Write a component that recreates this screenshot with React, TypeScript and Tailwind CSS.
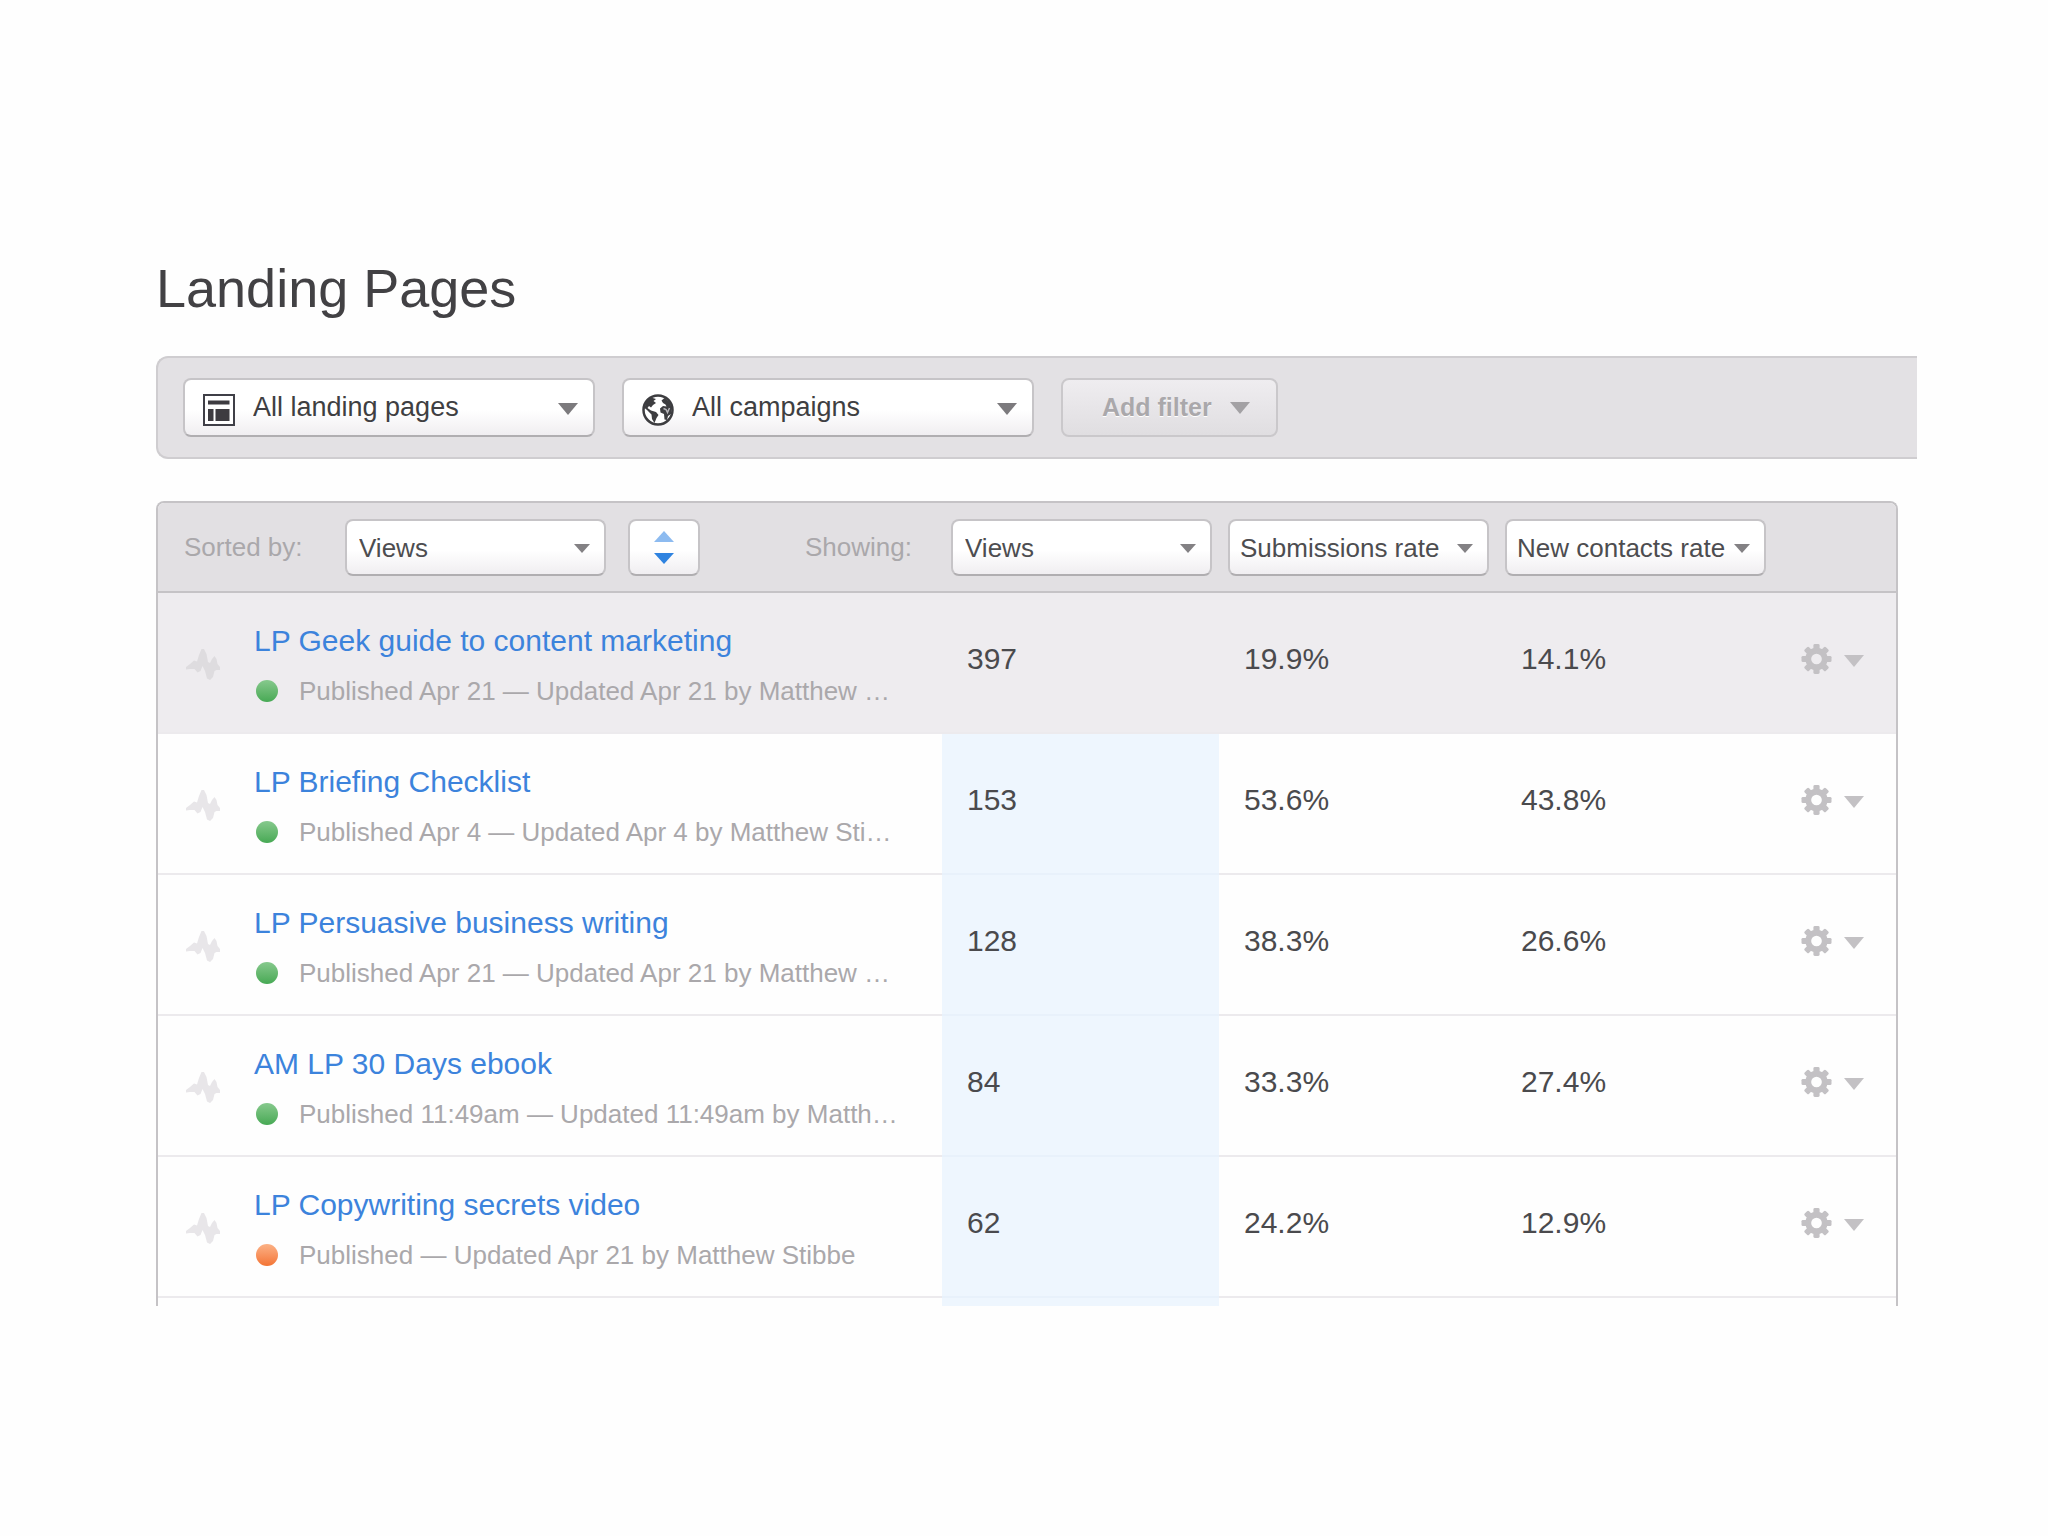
import React from "react";

type CaretProps = { className: string };

function Caret({ className }: CaretProps) {
  return (
    <svg viewBox="0 0 20 12" preserveAspectRatio="none" className={className} aria-hidden="true">
      <path d="M0 0H20L10 12Z" fill="currentColor" />
    </svg>
  );
}

function LayoutIcon() {
  return (
    <svg viewBox="0 0 32 32" className="size-8" aria-hidden="true">
      <rect x="1" y="1" width="30" height="30" fill="#fff" stroke="#3f3f47" strokeWidth="2" />
      <path d="M5 6.500H26.500V10.500H5ZM5 15H10.500V27H5ZM12.500 15H26.500V27H12.500Z" fill="#3d3b40" />
    </svg>
  );
}

function GlobeIcon() {
  return (
    <svg viewBox="0 0 32 32" className="size-8" aria-hidden="true">
      <circle cx="16" cy="16" r="14.500" fill="#fff" stroke="#3d3d40" strokeWidth="2.500" />
      <path
        d="M4 8L9 3.500L14 5L11.500 7L14 9L11 11L9 13.500L7 12L5.500 14L9 16.500L14 18L16.500 21L14.500 24L12.500 29L10 25L9.500 20.500L5 16L2.500 14Z"
        fill="#3d3d40"
      />
      <path
        d="M21 9L19.500 6.500L22.500 4L27.500 8L30 14L29 20L26 22L25 26L22.500 25.500L22 20L18.500 18.500L18 14.500L21 12L24.500 12.500L23.500 10.500Z"
        fill="#3d3d40"
      />
      <path d="M21.500 14.500L24 15.500L25.500 18.500L27.500 14" fill="none" stroke="#b9b7bb" strokeWidth="1.500" />
    </svg>
  );
}

function PulseIcon({ className }: { className: string }) {
  return (
    <svg viewBox="0 0 34 34" className={`h-[34px] w-[34px] shrink-0 ${className}`} aria-hidden="true">
      <path
        d="M0 20L4 17L8 13.500L11 14.500L13 8L15.500 2H18L20.500 7L22 15L24 16L26 12L28.500 9L30.500 12L31.500 17L34 20V23H30.500L28.500 24L27 30L24 33L21 31.500L19 24L16.500 19L14.500 24L11.500 25.500L8.500 22L4 22L0 22.500Z"
        fill="currentColor"
      />
    </svg>
  );
}

function GearIcon() {
  const teeth = [0, 45, 90, 135, 180, 225, 270, 315];
  return (
    <svg viewBox="0 0 32 32" className="h-8 w-[31px]" aria-hidden="true">
      <circle cx="16" cy="16" r="8.500" fill="none" stroke="currentColor" strokeWidth="6" />
      {teeth.map((angle) => (
        <rect key={angle} x="12.800" y="0.500" width="6.400" height="7" rx="1.500" fill="currentColor" transform={`rotate(${angle} 16 16)`} />
      ))}
    </svg>
  );
}

const controlLook =
  "rounded-lg border-2 border-[#c6c4c7] border-b-[#b0aeb1] bg-linear-to-b from-white from-55% to-[#f0eef1]";

type FilterSelectProps = { label: string; value: string; icon: React.ReactNode };

function FilterSelect({ label, value, icon }: FilterSelectProps) {
  return (
    <div className="relative w-[412px]">
      <span className="pointer-events-none absolute top-4 left-5">{icon}</span>
      <select
        aria-label={label}
        className={`${controlLook} block h-[59px] w-full appearance-none pr-12 pl-[68px] text-[27px] text-[#3f3f42]`}
      >
        <option>{value}</option>
      </select>
      <Caret className="pointer-events-none absolute top-[25px] right-[17px] h-3 w-5 text-[#7c7a7d]" />
    </div>
  );
}

type ColumnSelectProps = { id?: string; label?: string; value: string; pad?: string };

function ColumnSelect({ id, label, value, pad = "pl-2.5" }: ColumnSelectProps) {
  return (
    <div className="relative w-[261px]">
      <select
        id={id}
        aria-label={label}
        className={`${controlLook} ${pad} block h-[57px] w-full appearance-none pt-0.5 pr-8 text-[26px] font-normal text-[#4d4d50]`}
      >
        <option>{value}</option>
      </select>
      <Caret className="pointer-events-none absolute top-[25px] right-4 h-[9px] w-4 text-[#838184]" />
    </div>
  );
}

type Page = {
  title: string;
  meta: string;
  live: boolean;
  views: string;
  submissions: string;
  contacts: string;
};

const pages: Page[] = [
  {
    title: "LP Geek guide to content marketing",
    meta: "Published Apr 21 — Updated Apr 21 by Matthew …",
    live: true,
    views: "397",
    submissions: "19.9%",
    contacts: "14.1%",
  },
  {
    title: "LP Briefing Checklist",
    meta: "Published Apr 4 — Updated Apr 4 by Matthew Sti…",
    live: true,
    views: "153",
    submissions: "53.6%",
    contacts: "43.8%",
  },
  {
    title: "LP Persuasive business writing",
    meta: "Published Apr 21 — Updated Apr 21 by Matthew …",
    live: true,
    views: "128",
    submissions: "38.3%",
    contacts: "26.6%",
  },
  {
    title: "AM LP 30 Days ebook",
    meta: "Published 11:49am — Updated 11:49am by Matth…",
    live: true,
    views: "84",
    submissions: "33.3%",
    contacts: "27.4%",
  },
  {
    title: "LP Copywriting secrets video",
    meta: "Published — Updated Apr 21 by Matthew Stibbe",
    live: false,
    views: "62",
    submissions: "24.2%",
    contacts: "12.9%",
  },
];

const numberCell = "pb-2 pl-[25px] text-[30px] text-[#4a4a4d]";

function PageRow({ page, active }: { page: Page; active: boolean }) {
  return (
    <tr className={`h-[141px] border-b-2 border-[#eceaed] ${active ? "bg-[#eeecef]" : ""}`}>
      <td className="pt-[3px] pl-7">
        <div className="flex items-center gap-[34px]">
          <PulseIcon className={active ? "text-[#dedcdf]" : "text-[#e8e6e9]"} />
          <div className="whitespace-nowrap">
            <a href="#page" className="block text-[30px] leading-[38px] text-[#3c83dc]">
              {page.title}
            </a>
            <div className="mt-[15px] flex items-center gap-[21px] pl-0.5 text-[26px] leading-8 text-[#aaa8ab]">
              <span
                className={`size-[22px] rounded-full bg-linear-to-b ${
                  page.live ? "from-[#86c98d] to-[#46a954]" : "from-[#fbb185] to-[#f37433]"
                }`}
              />
              <span>{page.meta}</span>
            </div>
          </div>
        </div>
      </td>
      <td className={`${numberCell} ${active ? "" : "border-b-2 border-[#e8f1fb] bg-[#eef6fe]"}`}>{page.views}</td>
      <td className={numberCell}>{page.submissions}</td>
      <td className={numberCell}>{page.contacts}</td>
      <td className="pb-2 pl-7">
        <button type="button" aria-label={`Actions for ${page.title}`} className="flex items-center gap-3 text-[#c3c1c4]">
          <GearIcon />
          <Caret className="mt-1 h-3 w-5" />
        </button>
      </td>
    </tr>
  );
}

export default function App() {
  return (
    <main className="min-h-screen bg-[#fefefe] pt-[256px] pr-[131px] pl-[156px] font-['Liberation_Sans',Arial,sans-serif]">
      <h1 className="mb-9 text-[54px] leading-[64px] text-[#424144]">Landing Pages</h1>

      <section
        aria-label="Filters"
        className="flex gap-[27px] rounded-l-xl border-2 border-r-0 border-[#cfcdd0] bg-[#e3e1e4] px-[25px] py-5"
      >
        <FilterSelect label="Page type" value="All landing pages" icon={<LayoutIcon />} />
        <FilterSelect label="Campaign" value="All campaigns" icon={<GlobeIcon />} />
        <button
          type="button"
          className="flex h-[59px] w-[217px] items-center justify-between rounded-lg border-2 border-[#cac8cb] bg-linear-to-b from-[#efedf0] to-[#e0dee1] pr-[26px] pl-[39px] text-[25px] font-bold text-[#aaa8ab] [text-shadow:0_1px_0_#fff]"
        >
          Add filter
          <Caret className="h-3 w-5 text-[#a3a1a4]" />
        </button>
      </section>

      <div className="mt-[42px] mr-[19px] overflow-hidden rounded-t-lg border-2 border-b-0 border-[#c5c3c6]">
        <table className="w-full table-fixed border-collapse text-left">
          <colgroup>
            <col />
            <col className="w-[277px]" />
            <col className="w-[277px]" />
            <col className="w-[277px]" />
            <col className="w-[123px]" />
          </colgroup>
          <thead>
            <tr className="h-[89px] border-b-2 border-[#c5c3c6] bg-[#e2e0e3]">
              <th scope="col" className="pr-[30px] pl-[26px] font-normal">
                <div className="flex items-center text-[26px] text-[#aaa8ab]">
                  <label htmlFor="sort" className="w-[161px]">
                    Sorted by:
                  </label>
                  <ColumnSelect id="sort" value="Views" pad="pl-3" />
                  <button
                    type="button"
                    aria-label="Reverse sort order"
                    className={`${controlLook} ml-[22px] flex h-[57px] w-[72px] flex-col items-center justify-center gap-[11px]`}
                  >
                    <Caret className="h-[11px] w-5 rotate-180 text-[#8dbbf0]" />
                    <Caret className="h-[11px] w-5 text-[#2f83e0]" />
                  </button>
                  <span className="ml-auto">Showing:</span>
                </div>
              </th>
              <th scope="col" className="pl-[9px]">
                <ColumnSelect label="First column" value="Views" pad="pl-3" />
              </th>
              <th scope="col" className="pl-[9px]">
                <ColumnSelect label="Second column" value="Submissions rate" />
              </th>
              <th scope="col" className="pl-[9px]">
                <ColumnSelect label="Third column" value="New contacts rate" />
              </th>
              <td />
            </tr>
          </thead>
          <tbody>
            {pages.map((page, index) => (
              <PageRow key={page.title} page={page} active={index === 0} />
            ))}
            <tr className="h-[9px]" aria-hidden="true">
              <td />
              <td className="bg-[#eef6fe]" />
              <td colSpan={3} />
            </tr>
          </tbody>
        </table>
      </div>
    </main>
  );
}
